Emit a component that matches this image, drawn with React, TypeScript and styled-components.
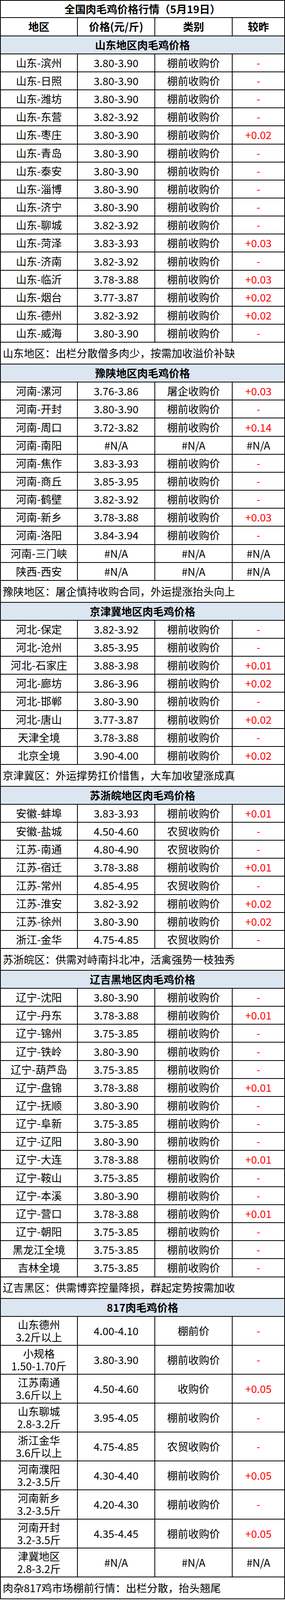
import React from 'react';
import styled, { createGlobalStyle } from 'styled-components';

const S = 4094 / 4701;
const h = (px: number) => `${(px * S).toFixed(3)}px`;

const GlobalStyle = createGlobalStyle`
  html, body {
    margin: 0;
    padding: 0;
    background: #ffffff;
  }
  body {
    font-family: "Noto Sans CJK SC", "Microsoft YaHei", "Noto Sans", sans-serif;
    color: #000;
  }
  * {
    box-sizing: border-box;
  }
`;

const Sheet = styled.div`
  width: 729px;
  border: 2px solid #000;
  border-bottom: none;
  font-size: 27px;
  line-height: 30px;
`;

const TitleRow = styled.div`
  height: ${h(51)};
  border-bottom: 2px solid #000;
  display: flex;
  align-items: center;
  justify-content: center;
  font-weight: 700;
`;

const Row = styled.div<{ $tall?: boolean }>`
  display: grid;
  grid-template-columns: 197px 198px 198px 132px;
  height: ${({ $tall }) => ($tall ? h(85) : h(53))};
  border-bottom: 2px solid #000;
`;

const Cell = styled.div<{ $bold?: boolean; $red?: boolean }>`
  display: flex;
  align-items: center;
  justify-content: center;
  text-align: center;
  white-space: nowrap;
  border-right: 2px solid #000;
  font-weight: ${({ $bold }) => ($bold ? 700 : 400)};
  color: ${({ $red }) => ($red ? '#ff0000' : '#000')};

  &:last-child {
    border-right: none;
  }
`;

const TwoLine = styled.div`
  line-height: 32px;
`;

const SectionBar = styled.div`
  height: ${h(53)};
  border-bottom: 2px solid #000;
  background: #dce6f1;
  display: flex;
  align-items: center;
  justify-content: center;
  font-weight: 700;
`;

const NoteRow = styled.div<{ $last?: boolean }>`
  height: ${({ $last }) => ($last ? h(65) : h(64))};
  border-bottom: 2px solid #000;
  display: flex;
  align-items: center;
  padding-left: 5px;
  white-space: nowrap;
`;

type Entry = [string, string, string, string];

interface Section {
  title: string;
  rows: Entry[];
  note: string;
  tall?: boolean;
}

const P = '棚前收购价';
const N = '农贸收购价';
const NA = '#N/A';

const sections: Section[] = [
  {
    title: '山东地区肉毛鸡价格',
    rows: [
      ['山东-滨州', '3.80-3.90', P, '-'],
      ['山东-日照', '3.80-3.90', P, '-'],
      ['山东-潍坊', '3.80-3.90', P, '-'],
      ['山东-东营', '3.82-3.92', P, '-'],
      ['山东-枣庄', '3.80-3.90', P, '+0.02'],
      ['山东-青岛', '3.80-3.90', P, '-'],
      ['山东-泰安', '3.80-3.90', P, '-'],
      ['山东-淄博', '3.80-3.90', P, '-'],
      ['山东-济宁', '3.80-3.90', P, '-'],
      ['山东-聊城', '3.82-3.92', P, '-'],
      ['山东-菏泽', '3.83-3.93', P, '+0.03'],
      ['山东-济南', '3.82-3.92', P, '-'],
      ['山东-临沂', '3.78-3.88', P, '+0.03'],
      ['山东-烟台', '3.77-3.87', P, '+0.02'],
      ['山东-德州', '3.82-3.92', P, '+0.02'],
      ['山东-威海', '3.80-3.90', P, '-'],
    ],
    note: '山东地区：出栏分散僧多肉少，按需加收溢价补缺',
  },
  {
    title: '豫陕地区肉毛鸡价格',
    rows: [
      ['河南-漯河', '3.76-3.86', '屠企收购价', '+0.03'],
      ['河南-开封', '3.80-3.90', P, '-'],
      ['河南-周口', '3.72-3.82', P, '+0.14'],
      ['河南-南阳', NA, NA, NA],
      ['河南-焦作', '3.83-3.93', P, '-'],
      ['河南-商丘', '3.85-3.95', P, '-'],
      ['河南-鹤壁', '3.82-3.92', P, '-'],
      ['河南-新乡', '3.78-3.88', P, '+0.03'],
      ['河南-洛阳', '3.84-3.94', P, '-'],
      ['河南-三门峡', NA, NA, NA],
      ['陕西-西安', NA, NA, NA],
    ],
    note: '豫陕地区：屠企慎持收购合同，外运提涨抬头向上',
  },
  {
    title: '京津冀地区肉毛鸡价格',
    rows: [
      ['河北-保定', '3.82-3.92', P, '-'],
      ['河北-沧州', '3.85-3.95', P, '-'],
      ['河北-石家庄', '3.88-3.98', P, '+0.01'],
      ['河北-廊坊', '3.86-3.96', P, '+0.02'],
      ['河北-邯郸', '3.80-3.90', P, '-'],
      ['河北-唐山', '3.77-3.87', P, '+0.02'],
      ['天津全境', '3.78-3.88', P, '-'],
      ['北京全境', '3.90-4.00', P, '+0.02'],
    ],
    note: '京津冀区：外运撑势扛价惜售，大车加收望涨成真',
  },
  {
    title: '苏浙皖地区肉毛鸡价格',
    rows: [
      ['安徽-蚌埠', '3.83-3.93', P, '+0.01'],
      ['安徽-盐城', '4.50-4.60', N, '-'],
      ['江苏-南通', '4.80-4.90', N, '-'],
      ['江苏-宿迁', '3.78-3.88', P, '+0.01'],
      ['江苏-常州', '4.85-4.95', N, '-'],
      ['江苏-淮安', '3.82-3.92', P, '+0.02'],
      ['江苏-徐州', '3.80-3.90', P, '+0.02'],
      ['浙江-金华', '4.75-4.85', N, '-'],
    ],
    note: '苏浙皖区：供需对峙南抖北冲，活禽强势一枝独秀',
  },
  {
    title: '辽吉黑地区肉毛鸡价格',
    rows: [
      ['辽宁-沈阳', '3.80-3.90', P, '-'],
      ['辽宁-丹东', '3.78-3.88', P, '+0.01'],
      ['辽宁-锦州', '3.75-3.85', P, '-'],
      ['辽宁-铁岭', '3.80-3.90', P, '-'],
      ['辽宁-葫芦岛', '3.75-3.85', P, '-'],
      ['辽宁-盘锦', '3.78-3.88', P, '+0.01'],
      ['辽宁-抚顺', '3.80-3.90', P, '-'],
      ['辽宁-阜新', '3.75-3.85', P, '-'],
      ['辽宁-辽阳', '3.80-3.90', P, '-'],
      ['辽宁-大连', '3.78-3.88', P, '+0.01'],
      ['辽宁-鞍山', '3.75-3.85', P, '-'],
      ['辽宁-本溪', '3.80-3.90', P, '-'],
      ['辽宁-营口', '3.78-3.88', P, '+0.01'],
      ['辽宁-朝阳', '3.75-3.85', P, '-'],
      ['黑龙江全境', '3.75-3.85', P, '-'],
      ['吉林全境', '3.75-3.85', P, '-'],
    ],
    note: '辽吉黑区：供需博弈控量降损，群起定势按需加收',
  },
  {
    title: '817肉毛鸡价格',
    tall: true,
    rows: [
      ['山东德州\n3.2斤以上', '4.00-4.10', '棚前价', '-'],
      ['小规格\n1.50-1.70斤', '3.80-3.90', P, '-'],
      ['江苏南通\n3.6斤以上', '4.50-4.60', '收购价', '+0.05'],
      ['山东聊城\n2.8-3.2斤', '3.95-4.05', P, '-'],
      ['浙江金华\n3.6斤以上', '4.75-4.85', N, '-'],
      ['河南濮阳\n3.2-3.5斤', '4.30-4.40', P, '+0.05'],
      ['河南新乡\n3.2-3.5斤', '4.20-4.30', P, '-'],
      ['河南开封\n3.2-3.5斤', '4.35-4.45', P, '+0.05'],
      ['津冀地区\n2.8-3.2斤', NA, NA, NA],
    ],
    note: '肉杂817鸡市场棚前行情：出栏分散，抬头翘尾',
  },
];

const RegionLabel = ({ text }: { text: string }) => {
  const lines = text.split('\n');
  if (lines.length === 1) return <>{text}</>;
  return (
    <TwoLine>
      {lines.map((l) => (
        <div key={l}>{l}</div>
      ))}
    </TwoLine>
  );
};

export default function App() {
  return (
    <>
      <GlobalStyle />
      <Sheet>
        <TitleRow>全国肉毛鸡价格行情（5月19日）</TitleRow>
        <Row>
          <Cell $bold>地区</Cell>
          <Cell $bold>价格(元/斤)</Cell>
          <Cell $bold>类别</Cell>
          <Cell $bold>较昨</Cell>
        </Row>
        {sections.map((s, si) => (
          <React.Fragment key={s.title}>
            <SectionBar>{s.title}</SectionBar>
            {s.rows.map(([region, price, kind, change]) => (
              <Row key={region} $tall={s.tall}>
                <Cell>
                  <RegionLabel text={region} />
                </Cell>
                <Cell>{price}</Cell>
                <Cell>{kind}</Cell>
                <Cell $red={change !== NA}>{change}</Cell>
              </Row>
            ))}
            <NoteRow $last={si === sections.length - 1}>{s.note}</NoteRow>
          </React.Fragment>
        ))}
      </Sheet>
    </>
  );
}
